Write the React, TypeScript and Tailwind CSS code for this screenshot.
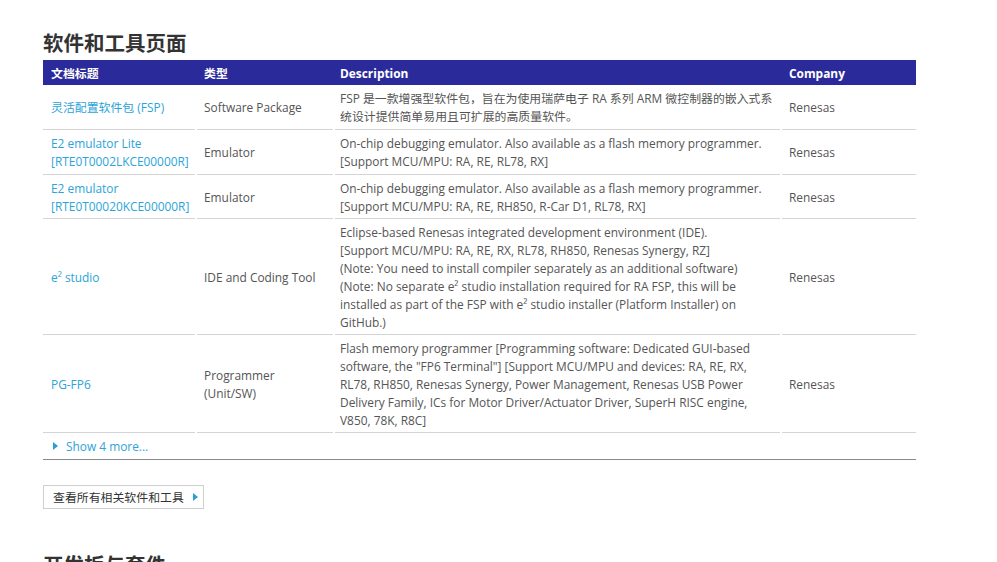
import React from "react";

const font = { fontFamily: '"Open Sans", "Noto Sans CJK SC", sans-serif' };

type Row = { title: React.ReactNode; type: React.ReactNode; desc: React.ReactNode; h: string };

const rows: Row[] = [
  {
    title: "灵活配置软件包 (FSP)",
    type: "Software Package",
    desc: (
      <>
        FSP 是一款增强型软件包，旨在为使用瑞萨电子 RA 系列 ARM 微控制器的嵌入式系
        <br />
        统设计提供简单易用且可扩展的高质量软件。
      </>
    ),
    h: "h-[45px]",
  },
  {
    title: (
      <>
        E2 emulator Lite
        <br />
        [RTE0T0002LKCE00000R]
      </>
    ),
    type: "Emulator",
    desc: (
      <>
        On-chip debugging emulator. Also available as a flash memory programmer.
        <br />
        [Support MCU/MPU: RA, RE, RL78, RX]
      </>
    ),
    h: "h-[45px]",
  },
  {
    title: (
      <>
        E2 emulator
        <br />
        [RTE0T00020KCE00000R]
      </>
    ),
    type: "Emulator",
    desc: (
      <>
        On-chip debugging emulator. Also available as a flash memory programmer.
        <br />
        [Support MCU/MPU: RA, RE, RH850, R-Car D1, RL78, RX]
      </>
    ),
    h: "h-[44px]",
  },
  {
    title: "e² studio",
    type: "IDE and Coding Tool",
    desc: (
      <>
        Eclipse-based Renesas integrated development environment (IDE).
        <br />
        [Support MCU/MPU: RA, RE, RX, RL78, RH850, Renesas Synergy, RZ]
        <br />
        (Note: You need to install compiler separately as an additional software)
        <br />
        (Note: No separate e² studio installation required for RA FSP, this will be
        <br />
        installed as part of the FSP with e² studio installer (Platform Installer) on
        <br />
        GitHub.)
      </>
    ),
    h: "h-[116px]",
  },
  {
    title: "PG-FP6",
    type: (
      <>
        Programmer
        <br />
        (Unit/SW)
      </>
    ),
    desc: (
      <>
        Flash memory programmer [Programming software: Dedicated GUI-based
        <br />
        software, the "FP6 Terminal"] [Support MCU/MPU and devices: RA, RE, RX,
        <br />
        RL78, RH850, Renesas Synergy, Power Management, Renesas USB Power
        <br />
        Delivery Family, ICs for Motor Driver/Actuator Driver, SuperH RISC engine,
        <br />
        V850, 78K, R8C]
      </>
    ),
    h: "h-[98px]",
  },
];

function Tri({ className }: { className?: string }) {
  return (
    <svg width="5" height="8" viewBox="0 0 5 8" className={className}>
      <path d="M0 0 L5 4 L0 8 Z" fill="#2b9fd2" />
    </svg>
  );
}

export default function App() {
  return (
    <div className="min-h-[562px] w-[997px] overflow-hidden bg-white text-[11.9px] leading-[18px] text-[#555]" style={font}>
      <div className="pl-[43px] pt-[29px]">
        <h2 className="text-[20.5px] font-bold leading-[28px] text-[#333]">软件和工具页面</h2>
        <div className="mt-[3px] w-[873px]">
          <div className="grid h-[25px] grid-cols-[152px_136px_445px_134px] gap-x-[2px] bg-[#2b2a9b] font-bold text-white">
            <div className="flex items-center pl-[8px]">文档标题</div>
            <div className="flex items-center pl-[7px]">类型</div>
            <div className="flex items-center pl-[5px]">Description</div>
            <div className="flex items-center pl-[7px]">Company</div>
          </div>
          {rows.map((r, i) => (
            <div key={i} className={`grid grid-cols-[152px_136px_445px_134px] gap-x-[2px] ${r.h}`}>
              <div className="flex items-center border-b border-[#d4d4d4] pl-[8px] text-[#2ba4d8]">
                <div>{r.title}</div>
              </div>
              <div className="flex items-center border-b border-[#d4d4d4] pl-[7px]">
                <div>{r.type}</div>
              </div>
              <div className="flex items-center border-b border-[#d4d4d4] pl-[5px]">
                <div>{r.desc}</div>
              </div>
              <div className="flex items-center border-b border-[#d4d4d4] pl-[7px]">
                <div>Renesas</div>
              </div>
            </div>
          ))}
          <div className="flex h-[27px] items-center border-b border-[#8a8a8a] pl-[10px] text-[#2ba4d8]">
            <Tri className="mr-[8px]" />
            <span>Show 4 more...</span>
          </div>
        </div>
        <div className="mt-[25px] flex h-[24px] w-[161px] items-center border border-[#cfcfcf] pl-[9px] text-[#333]">
          <span>查看所有相关软件和工具</span>
          <Tri className="ml-[9px]" />
        </div>
        <h2 className="mt-[42px] text-[20.5px] font-bold leading-[28px] text-[#333]">开发板与套件</h2>
      </div>
    </div>
  );
}
